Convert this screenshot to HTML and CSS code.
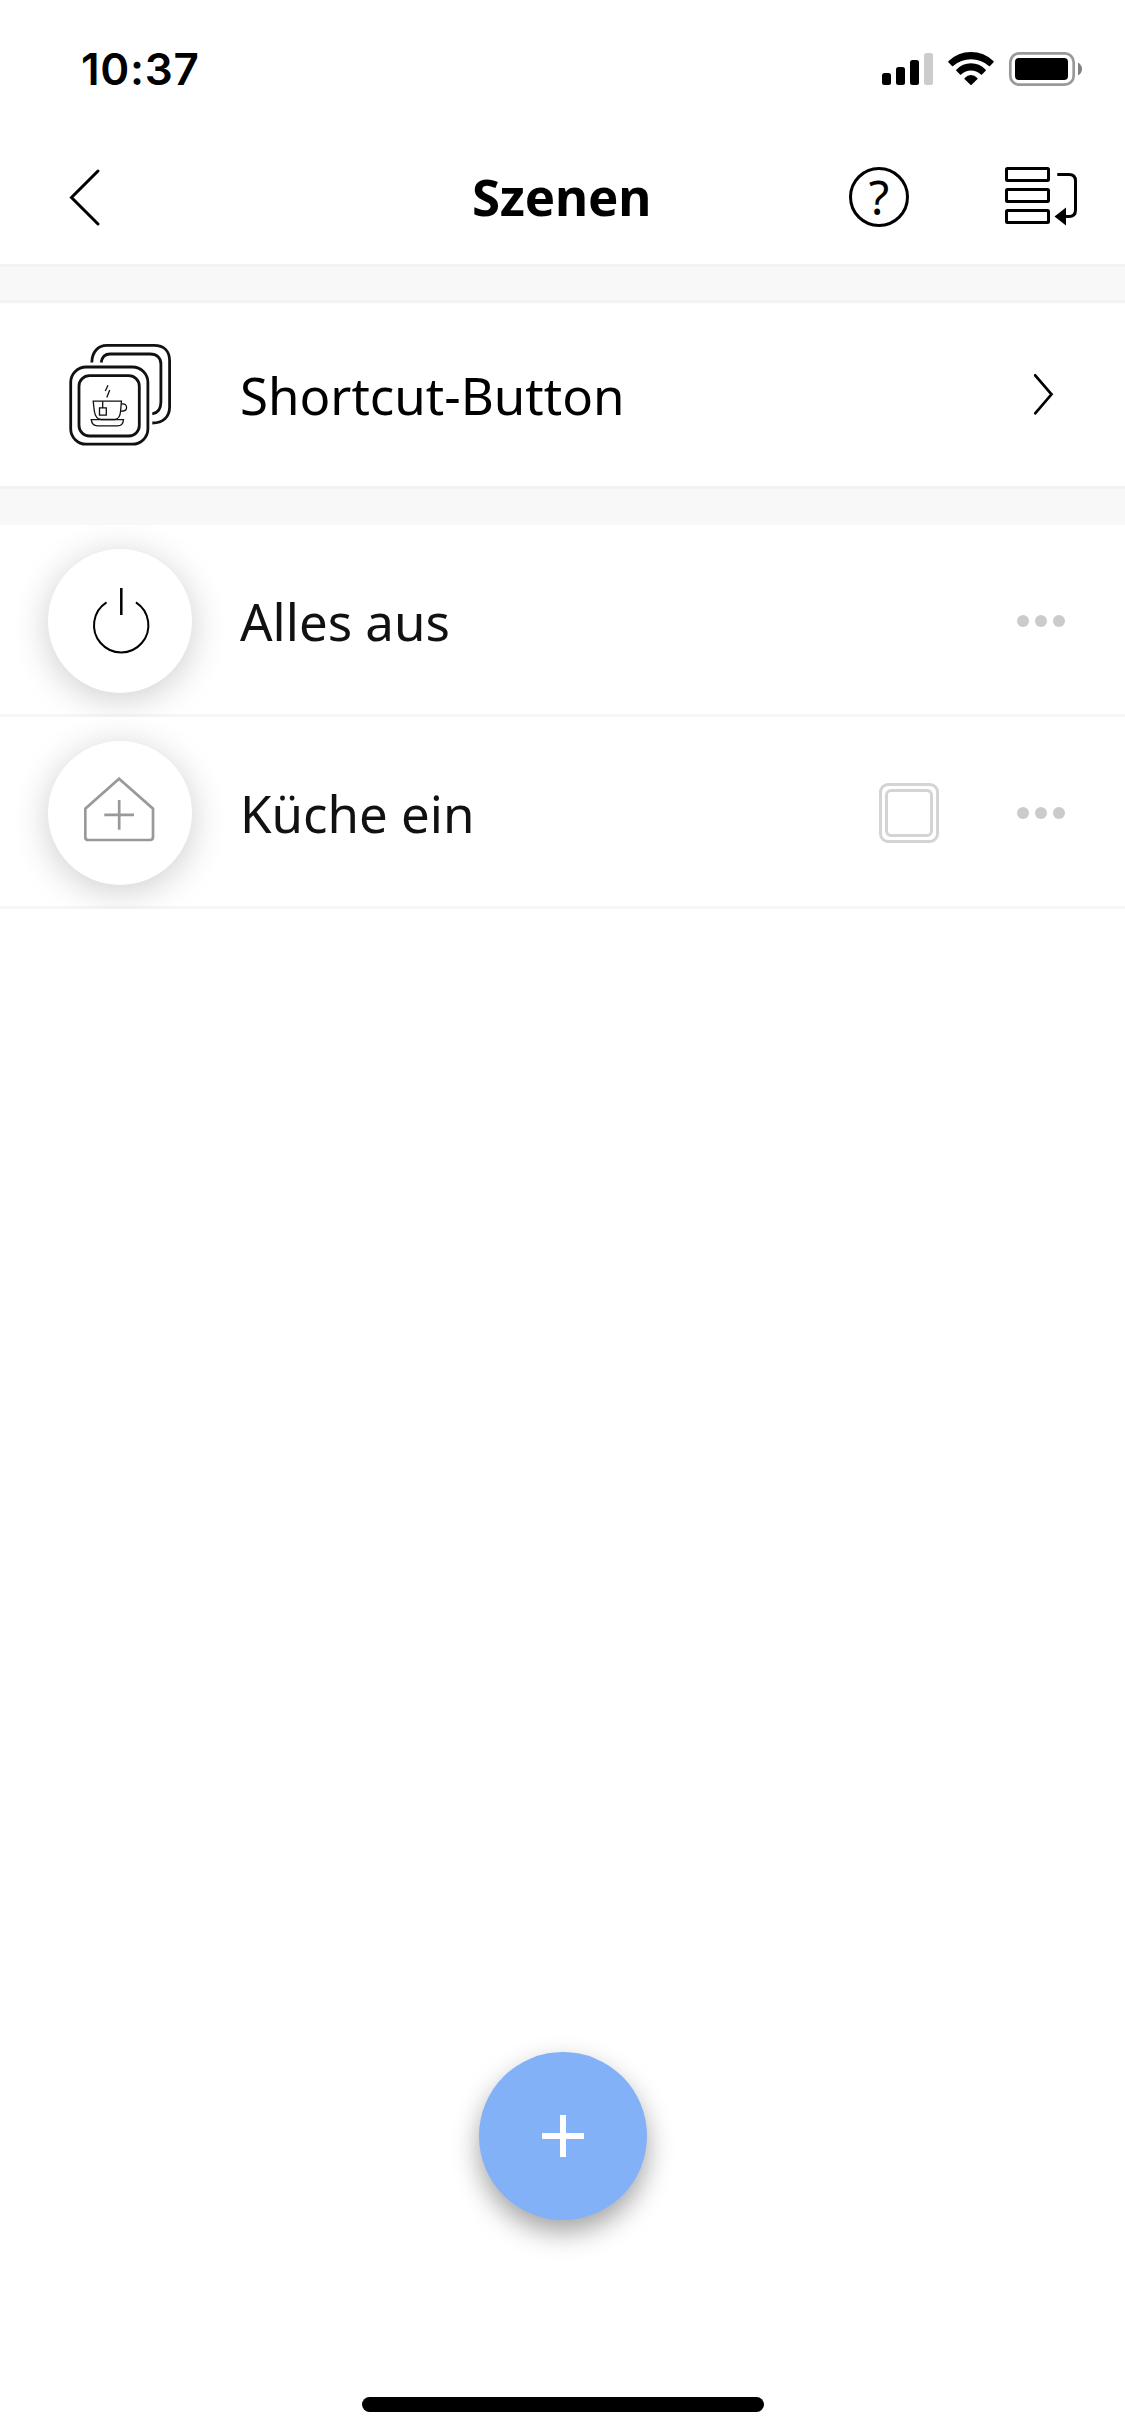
FILE: index.html
```html
<!DOCTYPE html>
<html lang="de">
<head>
<meta charset="utf-8">
<title>Szenen</title>
<link rel="stylesheet" href="styles.css">
</head>
<body>
<div class="screen">
  <div class="status-bar">
    <span class="time">10:37</span>
    <svg class="status-icons" width="204" height="36" viewBox="880 51 204 36">
      <rect x="882" y="73" width="9" height="12" rx="2.5"/>
      <rect x="896" y="67" width="9" height="18" rx="2.5"/>
      <rect x="910" y="60" width="9" height="25" rx="2.5"/>
      <rect x="924" y="53" width="9" height="32" rx="2.5" fill="#ccc"/>
      <path d="M948.3 62.3Q948 61.6 948.6 61Q958 52 971 52Q984 52 993.400 61Q994 61.600 993.600 62.300L990 66Q989.500 66.400 988.900 66Q981 59.300 971 59.300Q961 59.300 953.100 66Q952.500 66.400 952 66Z"/>
      <path d="M956.300 70.800Q955.900 70.200 956.500 69.600Q962.500 63.300 971 63.300Q979.500 63.300 985.500 69.600Q986.100 70.200 985.700 70.800L982 74.600Q981.500 75 980.900 74.600Q976.500 70.600 971 70.600Q965.500 70.600 961.100 74.600Q960.500 75 960 74.600Z"/>
      <path d="M964.500 79Q964.100 78.500 964.700 77.900Q967.500 75 971 75Q974.500 75 977.300 77.900Q977.900 78.500 977.500 79L971.600 84.800Q971 85.300 970.400 84.800Z"/>
      <rect x="1010.300" y="53.300" width="63.400" height="31.400" rx="9" fill="none" stroke="#999" stroke-width="2.700"/>
      <rect x="1015" y="58" width="53" height="22" rx="4"/>
      <path d="M1078 62.500Q1082 65 1082 69Q1082 73 1078 75.500Z" fill="#808080"/>
    </svg>
  </div>

  <header class="nav">
    <button class="nav-button back" aria-label="Zurück">
      <svg width="34" height="60" viewBox="67 167 34 60" class="line"><path d="M98 171L71.500 197.500L98 224" stroke-linecap="round"/></svg>
    </button>
    <h1 class="title">Szenen</h1>
    <div class="nav-actions">
      <button class="nav-button help" aria-label="Hilfe">?</button>
      <button class="nav-button" aria-label="Sortieren">
        <svg width="74" height="60" viewBox="1004 167 74 60" class="line">
          <rect x="1006.500" y="168.500" width="42" height="12" rx="1"/>
          <rect x="1006.500" y="189.500" width="42" height="12" rx="1"/>
          <rect x="1006.500" y="210.500" width="42" height="12" rx="1"/>
          <path d="M1057.300 174.500H1069Q1075.500 174.500 1075.500 181V210Q1075.500 216.500 1069 216.500H1064"/>
          <path d="M1054.500 216.500L1066 207.500V225.500Z" fill="#000" stroke="none"/>
        </svg>
      </button>
    </div>
  </header>

  <section class="shortcut-section">
    <a class="shortcut-row">
      <svg class="shortcut-icon" width="104" height="105" viewBox="68 342 104 105">
        <g stroke-width="2.800">
          <path d="M91.800 362.500C92 352 98 345.400 107 345.400H154C164 345.400 169.600 351 169.600 361V407C169.600 417 163 422.800 152.300 423"/>
          <path d="M101.200 362.500C102 357 105.500 354 110 354H150C157 354 160.900 358 160.900 364V402C160.900 409 158 413 152.300 413.800"/>
          <rect x="70.700" y="367" width="77.200" height="77.200" rx="15.500"/>
          <rect x="79" y="375.700" width="60.300" height="60.300" rx="10.500"/>
        </g>
        <g stroke-width="1.300">
          <path d="M93.200 401.200H121.400L120.600 411Q120 418.900 115 419.500H101Q95.500 419 94.300 411Z"/>
          <path d="M121.300 404Q126.500 403.200 126.600 407.400Q126.500 411.500 120.800 411.200"/>
          <path d="M102.700 401.200V407.800M99.500 407.800H106.300V415.200H99.500Z"/>
          <path d="M91.200 419.700H123.500Q123 425.800 117.500 425.800H97.500Q92 425.800 91.200 419.700Z"/>
          <path d="M108 385.300L105.300 391M109.700 390L106.800 397.500"/>
        </g>
      </svg>
      <span class="label">Shortcut-Button</span>
      <svg class="line" width="22" height="45" viewBox="1033 372 22 45"><path d="M1035.200 375.300L1051.500 394.300L1035.200 413.300" stroke-width="2.700" stroke-linecap="round"/></svg>
    </a>
  </section>

  <main class="scenes">
    <div class="scene">
      <span class="scene-icon">
        <svg width="72" height="72" viewBox="85 585 72 72" class="power"><path d="M107.500 602.300A27.200 27.200 0 1 0 136.900 602.300"/><path d="M122.300 588V615" stroke-width="2.500"/></svg>
      </span>
      <span class="label">Alles aus</span>
      <span class="more"><i></i><i></i><i></i></span>
    </div>
    <div class="scene">
      <span class="scene-icon">
        <svg width="72" height="72" viewBox="84 777 72 72" class="house"><path d="M119.100 778.700L153 808.700V837Q153 840 150 840H88.300Q85.300 840 85.300 837V808.700Z"/><path d="M104.300 814.900H134M119.200 800V829.700"/></svg>
      </span>
      <span class="label">Küche ein</span>
      <svg class="tile" width="60" height="60" viewBox="0 0 60 60">
        <rect x="1.500" y="1.500" width="57" height="57" rx="7.500"/>
        <rect x="7.500" y="7.500" width="45" height="45" rx="4.500"/>
      </svg>
      <span class="more"><i></i><i></i><i></i></span>
    </div>
  </main>

  <footer class="footer">
    <button class="fab" aria-label="Szene hinzufügen"><svg width="42" height="42" viewBox="0 0 42 42"><path d="M0 21H42M21 0V42" stroke="#fff" stroke-width="6"/></svg></button>
    <div class="home-indicator"></div>
  </footer>
</div>
</body>
</html>
```
FILE: styles.css
```css
* { box-sizing: border-box; }

body {
  margin: 0;
  background: #fff;
  color: #000;
  font-family: "Noto Sans", sans-serif;
}

button {
  padding: 0;
  border: 0;
  background: none;
  font: inherit;
  color: inherit;
}

svg { display: block; flex: none; }

.line { fill: none; stroke: #000; stroke-width: 3; }

.screen {
  width: 1125px;
  height: 2436px;
  display: flex;
  flex-direction: column;
  overflow: hidden;
}

.status-bar {
  height: 132px;
  padding: 51px 41px 0 81px;
  display: flex;
  justify-content: space-between;
  align-items: flex-start;
}

.time {
  font: 600 44px/36px Inter, sans-serif;
  letter-spacing: .7px;
}

.nav {
  height: 135px;
  padding: 0 47px 2px 67px;
  border-bottom: 3px solid #f2f2f2;
  display: grid;
  grid-template-columns: 1fr auto 1fr;
  align-items: center;
}

.nav-button { display: flex; align-items: center; justify-content: center; }

.back { justify-self: start; }

.title {
  margin: 0;
  font-size: 51px;
  line-height: 70px;
  font-weight: 700;
  letter-spacing: -.2px;
  transform: translate(-11px, -1px);
}

.nav-actions {
  display: flex;
  justify-content: flex-end;
  gap: 95px;
}

.help {
  width: 60px;
  height: 60px;
  border: 3px solid #000;
  border-radius: 50%;
  font-size: 47px;
  font-weight: 400;
  line-height: 54px;
}

.shortcut-section {
  padding: 33px 0 36px;
  background: #f8f8f8;
}

.shortcut-row {
  height: 189px;
  padding: 0 70px 0 68px;
  border: solid #f2f2f2;
  border-width: 3px 0;
  background: #fff;
  display: flex;
  align-items: center;
}

.shortcut-icon { fill: none; stroke: #111; margin-right: 68px; }

.label {
  flex: 1;
  font-size: 51px;
  line-height: 70px;
  white-space: nowrap;
}

.scene {
  height: 192px;
  padding: 0 60px 0 48px;
  display: flex;
  align-items: center;
  overflow: hidden;
  box-shadow: inset 0 -3px #f7f7f7;
  color: #111;
}

.scene-icon {
  width: 144px;
  height: 144px;
  margin-right: 48px;
  border-radius: 50%;
  background: #fff;
  box-shadow: 0 6px 36px rgba(0, 0, 0, .2);
  display: flex;
  align-items: center;
  justify-content: center;
}

.power { fill: none; stroke: #000; stroke-width: 2; }

.house { fill: none; stroke: #999; stroke-width: 2.7; }

.tile {
  margin-right: 78px;
  fill: none;
  stroke: #d4d4d4;
  stroke-width: 3;
}

.more { display: flex; gap: 6px; }

.more i {
  width: 12px;
  height: 12px;
  border-radius: 50%;
  background: #cbcbcb;
}

.footer {
  margin-top: auto;
  padding: 0 0 24px 1px;
  display: flex;
  flex-direction: column;
  align-items: center;
  gap: 177px;
}

.fab {
  width: 168px;
  height: 168px;
  border-radius: 50%;
  background: #82b1f8;
  box-shadow: 0 12px 27px rgba(0, 0, 0, .36);
  display: flex;
  align-items: center;
  justify-content: center;
}

.home-indicator {
  width: 402px;
  height: 15px;
  border-radius: 8px;
  background: #000;
}
```
